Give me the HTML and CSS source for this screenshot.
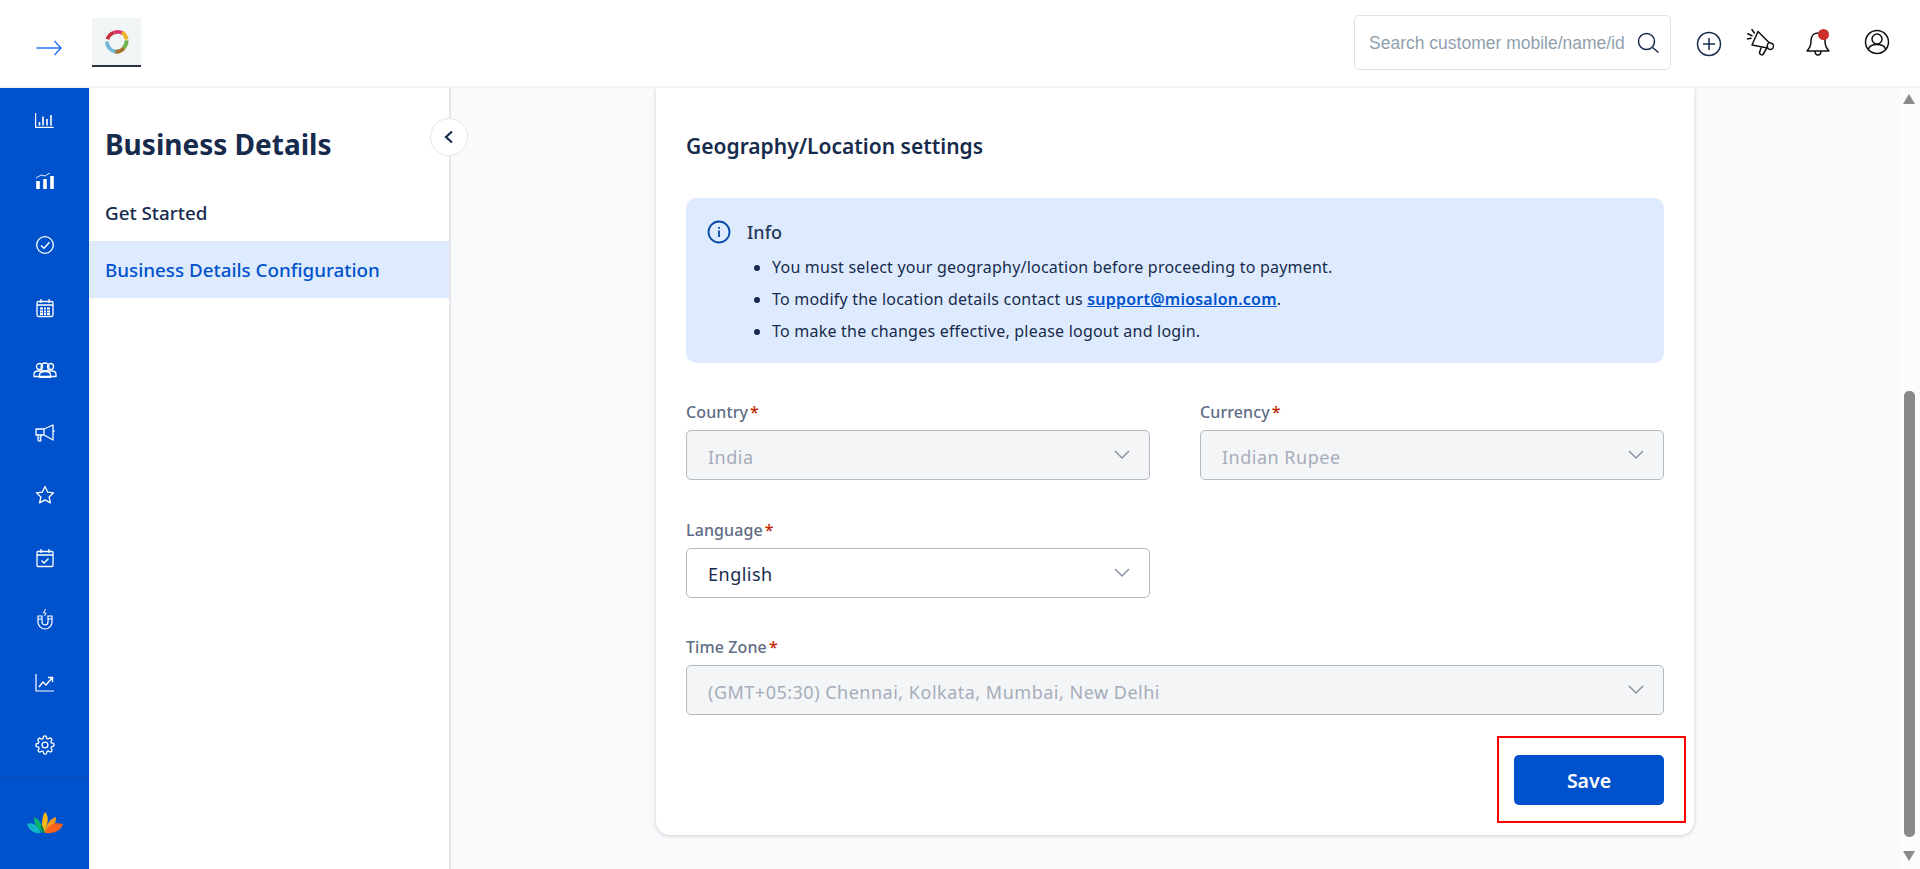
FILE: index.html
```html
<!DOCTYPE html>
<html lang="en">
<head>
<meta charset="utf-8">
<title>Business Details</title>
<link rel="stylesheet" href="styles.css">
</head>
<body>
<header class="topbar">
  <div class="topbar-left">
    <svg class="menu-arrow" viewBox="0 0 26 18" width="26" height="18" fill="none" stroke="#2670f0" stroke-width="1.4"><path d="M0.5 9H25M18.500 2l6.500 7-6.500 7"/></svg>
    <div class="brand-logo">
      <svg viewBox="0 0 24 24" width="27" height="27" fill="none" stroke-width="3.4">
        <path d="M4 10a9 9 0 0 1 6-6" stroke="#c8313f"/>
        <path d="M10 4a9 9 0 0 1 8 1" stroke="#d9366f"/>
        <path d="M17 3.800a9 9 0 0 1 4 6.500" stroke="#eeb32b"/>
        <path d="M21 11a9 9 0 0 1-3 7" stroke="#6eb44a"/>
        <path d="M18.500 18a9 9 0 0 1-8 3" stroke="#a8702f"/>
        <path d="M11 21a9 9 0 0 1-7.500-9" stroke="#6fb8d6"/>
      </svg>
    </div>
  </div>
  <div class="topbar-right">
    <div class="search-box">
      <span class="search-text">Search customer mobile/name/id</span>
      <svg viewBox="0 0 24 24" width="24" height="24" fill="none" stroke="#172b4d" stroke-width="1.500"><circle cx="10.500" cy="10.500" r="8"/><path d="M16.500 16.500l6 5"/></svg>
    </div>
    <svg class="tool plus" viewBox="0 0 26 26" width="26" height="26" fill="none" stroke="#172b4d" stroke-width="1.500"><circle cx="13" cy="13" r="11.500"/><path d="M13 7v12M7 13h12"/></svg>
    <svg class="tool speaker" viewBox="0 0 27 27" width="27" height="27" fill="none" stroke="#111" stroke-width="1.500" stroke-linejoin="round" stroke-linecap="round"><path d="M11 2.500L22 13.500c3 .5 4.500 1.500 4.500 3.500s-1.500 3.500-3 3.500c-1 0-2-.5-3-1.500L5 16z"/><path d="M14 19l-1.500 4.500c0 2 2.500 3 3.500 2l3.500-6M22 13.500c-1.500 1-2 3.500-1.500 5.500"/><path d="M5 .5l2.300 3.500M.8 4.700L5 6.700M.3 10l3.700-.7"/></svg>
    <span class="tool bell-wrap">
      <svg viewBox="0 0 26 30" width="26" height="30" fill="none" stroke="#111" stroke-width="1.500" stroke-linejoin="round"><path d="M13 5c-5 0-7 4-7 8 0 6-2 8-4 10h22c-2-2-4-4-4-10 0-4-2-8-7-8zM10 23c0 3 1.500 4 3 4s3-1 3-4"/></svg>
      <span class="bell-dot"></span>
    </span>
    <svg class="tool profile" viewBox="0 0 26 26" width="26" height="26" fill="none" stroke="#111" stroke-width="1.500"><circle cx="13" cy="13" r="11.500"/><circle cx="13" cy="10" r="5"/><path d="M4.500 20c1-3.500 4-4.500 8.500-4.500s7.500 1 8.500 4.500"/></svg>
  </div>
</header>
<div class="body-row">
  <nav class="rail">
    <div class="rail-items">
      <a class="rail-item"><svg viewBox="0 -1 19 16" width="19" height="16" fill="none" stroke="#fff" stroke-width="1.200"><path d="M.6 0v14.400h18"/><path d="M4.500 12.500V9M8 12.500V3.500M12 12.500V6M16 12.500V2" stroke-width="1.600"/></svg></a>
      <a class="rail-item"><svg viewBox="0 3 20 20" width="20" height="20" fill="none" stroke="#fff"><path d="M1 8l5-3 4 1 8-5" stroke-width=".9"/><path d="M3 11v8M10 9v10M17 6v13" stroke-width="3.600"/></svg></a>
      <a class="rail-item"><svg viewBox="0 0 20 20" width="20" height="20" fill="none" stroke="#fff" stroke-width="1.300"><circle cx="10" cy="10" r="8.300"/><path d="M6 10.500l3 2.800 5.500-6" stroke-width="1.500"/></svg></a>
      <a class="rail-item"><svg viewBox="0 0 20 20" width="20" height="20" fill="none" stroke="#fff" stroke-width="1.300"><rect x="2" y="3.500" width="16" height="15" rx="1.500"/><path d="M2 7h16M6 1v4M14 1v4"/><path d="M5 10.500h10M5 13.500h10M5 16h10" stroke-width="2"/><path d="M8.500 9v8.500M11.500 9v8.500" stroke="#0052cc" stroke-width="1"/></svg></a>
      <a class="rail-item"><svg viewBox="0 0 24 16" width="24" height="16" fill="none" stroke="#fff" stroke-width="1.300"><circle cx="6.500" cy="4.500" r="3"/><circle cx="17.500" cy="4.500" r="3"/><path d="M1 14.500v-2c0-2 1-3.500 4-3.500h14c3 0 4 1.500 4 3.500v2z"/><circle cx="12" cy="5" r="4"/><path d="M6.500 15.500v-2.500c0-2 2-3.500 5.500-3.500s5.500 1.500 5.500 3.500v2.500z"/></svg></a>
      <a class="rail-item"><svg viewBox="0 0 22 20" width="22" height="20" fill="none" stroke="#fff" stroke-width="1.300" stroke-linejoin="round"><path d="M2 6h8v6H2zM10 6l9-4v15l-9-5zM19 8h1.500M4 12v5c0 1.500 3 1.500 3 0l-1-2 1-1v-2"/></svg></a>
      <a class="rail-item"><svg viewBox="0 0 20 20" width="20" height="20" fill="none" stroke="#fff" stroke-width="1.300" stroke-linejoin="round"><path d="M10 1.500l2.600 5.600 6 .7-4.500 4.100 1.300 6-5.400-3-5.400 3 1.300-6-4.500-4.100 6-.7z"/></svg></a>
      <a class="rail-item"><svg viewBox="0 0 20 20" width="20" height="20" fill="none" stroke="#fff" stroke-width="1.300"><rect x="2" y="3.500" width="16" height="15" rx="1"/><path d="M2 7h16M6 1v4M14 1v4"/><path d="M6.500 12.500l2.500 2.500 4.500-4.500" stroke-width="1.500"/></svg></a>
      <a class="rail-item"><svg viewBox="0 1 20 22" width="20" height="22" fill="none" stroke="#fff" stroke-width="1.200"><path d="M3 8v6a7 7 0 0 0 14 0V8h-4v6a3 3 0 0 1-6 0V8z"/><path d="M3 11h4M13 11h4"/><path d="M11 0L8.500 5H11L9.500 8" stroke-width="1"/></svg></a>
      <a class="rail-item"><svg viewBox="0 0 20 20" width="20" height="20" fill="none" stroke="#fff" stroke-width="1.200"><path d="M1 1v17h18"/><path d="M4 14l4-5 3 3 6-7M13 4.500h4.500V9" stroke-width="1.400"/></svg></a>
      <a class="rail-item"><svg viewBox="0 0 24 24" width="20" height="20" fill="none" stroke="#fff" stroke-width="1.600" stroke-linejoin="round"><circle cx="12" cy="12" r="3.500"/><path d="M19.400 15a1.650 1.650 0 0 0 .33 1.820l.06.06a2 2 0 1 1-2.830 2.830l-.06-.06a1.650 1.650 0 0 0-2.800 1.170V21a2 2 0 0 1-4 0v-.09a1.650 1.650 0 0 0-2.820-1.110l-.06.06a2 2 0 1 1-2.830-2.830l.06-.06a1.650 1.650 0 0 0-1.170-2.800H3a2 2 0 0 1 0-4h.09A1.650 1.650 0 0 0 4.200 7.350l-.06-.06a2 2 0 1 1 2.830-2.830l.06.06a1.650 1.650 0 0 0 2.800-1.170V3a2 2 0 0 1 4 0v.09a1.650 1.650 0 0 0 2.820 1.110l.06-.06a2 2 0 1 1 2.830 2.830l-.06.06a1.650 1.650 0 0 0 1.170 2.800H21a2 2 0 0 1 0 4h-.09a1.650 1.650 0 0 0-1.510 1.170z"/></svg></a>
    </div>
    <div class="rail-foot">
      <svg viewBox="0 0 36 22" width="36" height="22">
        <path d="M0 12c5-2 10 0 14 9-7 1-12-3-14-9z" fill="#11b5c9"/>
        <path d="M7 5c5 2 8 7 10 16-6-3-10-8-10-16z" fill="#0bb36b"/>
        <path d="M18 0c3 3 4 8 1 15l-1 6-3-8c0-5 1-10 3-13z" fill="#fdb813"/>
        <path d="M29 5c0 8-4 13-11 16 1-9 5-14 11-16z" fill="#f99a1c"/>
        <path d="M36 12c-2 6-8 10-18 9 3-9 10-11 18-9z" fill="#f9621d"/>
        <path d="M15 13l3 8-2 0c-1-3-2-5-3-6z" fill="#08804a"/>
      </svg>
    </div>
  </nav>
  <aside class="subnav">
    <h1 class="subnav-title">Business Details</h1>
    <a class="subnav-link">Get Started</a>
    <a class="subnav-link active">Business Details Configuration</a>
    <button class="collapse" aria-label="Collapse">
      <svg viewBox="0 0 12 14" width="12" height="14" fill="none" stroke="#172b4d" stroke-width="2.200"><path d="M9 1.500L3 7l6 5.500"/></svg>
    </button>
  </aside>
  <main class="main">
    <div class="main-inner">
      <section class="card">
        <h2 class="card-title">Geography/Location settings</h2>
        <div class="info">
          <svg class="info-icon" viewBox="0 0 24 24" width="24" height="24" fill="none" stroke="#0747a6" stroke-width="1.800"><circle cx="12" cy="12" r="10.500"/><path d="M12 10.500v6.500M12 7v1.800"/></svg>
          <div class="info-body">
            <div class="info-head">Info</div>
            <ul class="info-list">
              <li>You must select your geography/location before proceeding to payment.</li>
              <li>To modify the location details contact us <a class="mail">support@miosalon.com</a>.</li>
              <li>To make the changes effective, please logout and login.</li>
            </ul>
          </div>
        </div>
        <div class="form-grid">
          <div class="field">
            <label class="label">Country<span class="req">*</span></label>
            <div class="select disabled"><span class="select-value">India</span><svg class="chev" viewBox="0 0 16 10" width="16" height="10" fill="none" stroke-width="1.500"><path d="M1 1l7 7 7-7"/></svg></div>
          </div>
          <div class="field">
            <label class="label">Currency<span class="req">*</span></label>
            <div class="select disabled"><span class="select-value">Indian Rupee</span><svg class="chev" viewBox="0 0 16 10" width="16" height="10" fill="none" stroke-width="1.500"><path d="M1 1l7 7 7-7"/></svg></div>
          </div>
          <div class="field">
            <label class="label">Language<span class="req">*</span></label>
            <div class="select"><span class="select-value">English</span><svg class="chev" viewBox="0 0 16 10" width="16" height="10" fill="none" stroke-width="1.500"><path d="M1 1l7 7 7-7"/></svg></div>
          </div>
          <div class="field wide">
            <label class="label">Time Zone<span class="req">*</span></label>
            <div class="select disabled"><span class="select-value">(GMT+05:30) Chennai, Kolkata, Mumbai, New Delhi</span><svg class="chev" viewBox="0 0 16 10" width="16" height="10" fill="none" stroke-width="1.500"><path d="M1 1l7 7 7-7"/></svg></div>
          </div>
        </div>
        <div class="actions">
          <button class="save">Save</button>
          <span class="highlight"></span>
        </div>
      </section>
    </div>
    <div class="scrollbar">
      <span class="sb-up"></span>
      <span class="sb-track"><span class="sb-thumb"></span></span>
      <span class="sb-down"></span>
    </div>
  </main>
</div>
</body>
</html>
```
FILE: styles.css
```css
* { box-sizing: border-box; }
html, body { margin: 0; height: 100%; overflow: hidden; }
body { font-family: "Noto Sans", sans-serif; color: #172b4d; background: #fff; display: flex; flex-direction: column; height: 869px; }
h1, h2 { margin: 0; }

.topbar { height: 88px; flex: none; display: flex; justify-content: space-between; align-items: flex-start; border-bottom: 2px solid #f3f4f6; background: #fff; }
.topbar-left { display: flex; align-items: flex-start; padding: 18px 0 0 36px; }
.menu-arrow { margin-top: 21px; }
.brand-logo { width: 49px; height: 49px; margin-left: 30px; background: #f1f5f5; border-bottom: 2px solid #2b3240; display: flex; align-items: center; justify-content: center; }
.topbar-right { display: flex; align-items: flex-start; padding: 15px 0 0 0; }
.search-box { width: 317px; height: 55px; border: 1px solid #dfe1e6; border-radius: 5px; display: flex; align-items: center; padding: 0 10px 0 14px; justify-content: space-between; }
.search-text { font-family: "Liberation Sans", Arial, sans-serif; font-size: 17.5px; color: #8f9fae; white-space: nowrap; padding-top: 2px; }
.tool { display: block; flex: none; }
.plus { margin: 16px 0 0 25px; }
.speaker { margin: 14px 0 0 25px; }
.bell-wrap { position: relative; width: 26px; height: 30px; margin: 13px 0 0 31px; }
.bell-dot { position: absolute; top: 1px; right: 2px; width: 11px; height: 11px; border-radius: 50%; background: #c9302c; }
.profile { margin: 14px 30px 0 33px; }

.body-row { flex: 1; display: flex; min-height: 0; }
.rail { width: 89px; flex: none; background: #0052cc; display: flex; flex-direction: column; }
.rail-items { height: 690px; padding-top: 1px; border-bottom: 1px solid #0a4bb8; }
.rail-item { height: 62.5px; display: flex; align-items: center; justify-content: center; }
.rail-foot { flex: 1; display: flex; align-items: center; justify-content: center; padding-bottom: 2px; }

.subnav { width: 362px; flex: none; position: relative; background: #fff; border-right: 2px solid #e5e7eb; }
.subnav-title { font-size: 28px; line-height: 38px; font-weight: 700; padding: 37px 0 0 16px; height: 96px; color: #172b4d; }
.subnav-link { display: flex; align-items: center; height: 57px; padding-left: 16px; font-size: 18.8px; font-weight: 500; color: #172b4d; }
.subnav-link.active { background: #deebff; color: #0052cc; }
.collapse { position: absolute; top: 30px; right: -19px; width: 38px; height: 38px; border-radius: 50%; border: 1px solid #e5e7eb; background: #fff; display: flex; align-items: center; justify-content: center; padding: 0; }

.main { flex: 1; display: flex; background: #f9fafb; min-width: 0; overflow: hidden; }
.main-inner { flex: 1; padding-left: 205px; }
.card { width: 1038px; height: 747px; background: #fff; border-radius: 0 0 14px 14px; box-shadow: 0 1px 4px rgba(23, 43, 77, .2); padding: 43px 30px 0; }
.card-title { font-size: 21px; line-height: 30px; font-weight: 600; color: #172b4d; margin-bottom: 37px; }
.info { display: flex; height: 165px; background: #deebff; border-radius: 10px; padding: 22px 22px 0 21px; margin-bottom: 37px; }
.info-icon { flex: none; }
.info-body { margin-left: 16px; }
.info-head { font-size: 18px; line-height: 24px; font-weight: 500; color: #253858; }
.info-list { margin: 7px 0 0; padding-left: 25px; font-size: 16px; letter-spacing: .22px; line-height: 32px; color: #172b4d; }
.mail { color: #0052cc; font-weight: 600; text-decoration: underline; }

.form-grid { display: grid; grid-template-columns: 464px 464px; column-gap: 50px; row-gap: 37.5px; }
.field.wide { grid-column: 1 / -1; }
.label { display: block; font-size: 16px; letter-spacing: .1px; line-height: 24px; font-weight: 500; color: #5e6c84; height: 30px; }
.req { color: #bf2600; margin-left: 2px; }
.select { height: 50px; border: 1px solid #b3bac5; border-radius: 5px; background: #fff; display: flex; align-items: center; justify-content: space-between; padding: 0 19px 0 21px; font-size: 18px; letter-spacing: .5px; color: #172b4d; }
.select-value { padding-top: 3px; }
.select.disabled { background: #f4f5f7; color: #a5adba; }
.chev { stroke: #8993a4; flex: none; }

.actions { display: flex; justify-content: flex-end; position: relative; margin-top: 40px; }
.save { width: 150px; height: 50px; border: 0; border-radius: 5px; background: #0052cc; color: #fff; font-family: inherit; font-size: 19.5px; font-weight: 600; }
.highlight { position: absolute; right: -22px; top: -19px; width: 189px; height: 87px; border: 2px solid #f00; pointer-events: none; }

.scrollbar { width: 20px; flex: none; padding-left: 3px; background: #fbfcfc; display: flex; flex-direction: column; align-items: flex-start; }
.sb-up { width: 0; height: 0; border-left: 6.5px solid transparent; border-right: 6.5px solid transparent; border-bottom: 10px solid #8a8a8a; margin-top: 6px; }
.sb-track { flex: 1; width: 11px; margin-left: 1px; position: relative; }
.sb-thumb { position: absolute; left: 0; right: 0; bottom: 14px; height: 446px; background: #8a8a8a; border-radius: 5px; }
.sb-down { width: 0; height: 0; border-left: 6.5px solid transparent; border-right: 6.5px solid transparent; border-top: 10px solid #8a8a8a; margin-bottom: 8px; }
```
